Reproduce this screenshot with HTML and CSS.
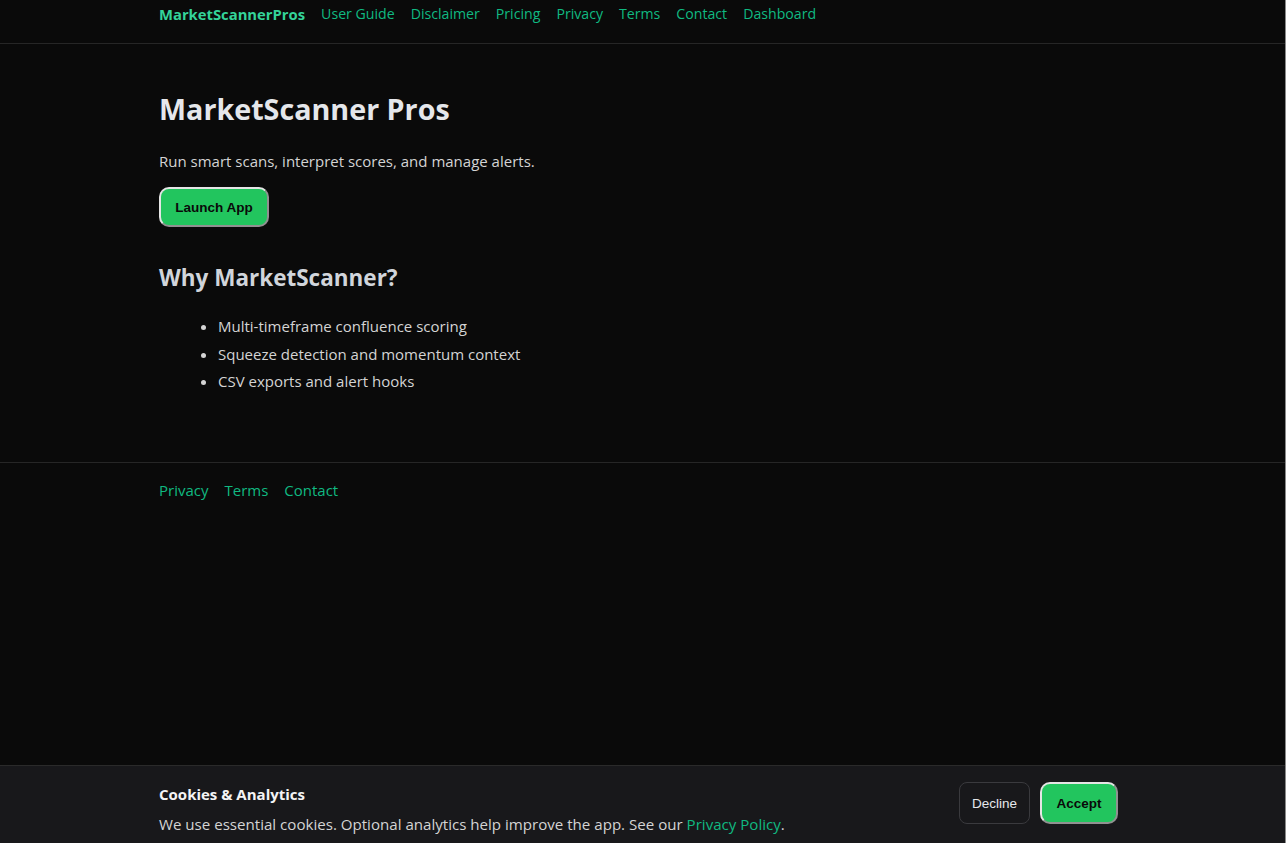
FILE: index.html
```html
<!DOCTYPE html>
<html lang="en">
<head>
<meta charset="utf-8">
<title>MarketScanner Pros</title>
<link rel="stylesheet" href="styles.css">
</head>
<body>
<header class="site-header">
  <nav class="container nav">
    <a class="brand" href="#">MarketScannerPros</a>
    <a class="nav-link" href="#">User Guide</a>
    <a class="nav-link" href="#">Disclaimer</a>
    <a class="nav-link" href="#">Pricing</a>
    <a class="nav-link" href="#">Privacy</a>
    <a class="nav-link" href="#">Terms</a>
    <a class="nav-link" href="#">Contact</a>
    <a class="nav-link" href="#">Dashboard</a>
  </nav>
</header>
<main class="container main">
  <h1 class="title">MarketScanner Pros</h1>
  <p class="lead">Run smart scans, interpret scores, and manage alerts.</p>
  <button class="btn-primary launch">Launch App</button>
  <h2 class="subtitle">Why MarketScanner?</h2>
  <ul class="features">
    <li>Multi-timeframe confluence scoring</li>
    <li>Squeeze detection and momentum context</li>
    <li>CSV exports and alert hooks</li>
  </ul>
</main>
<footer class="site-footer">
  <div class="container footer-links">
    <a class="nav-link" href="#">Privacy</a>
    <a class="nav-link" href="#">Terms</a>
    <a class="nav-link" href="#">Contact</a>
  </div>
</footer>
<div class="cookie-banner">
  <div class="cookie-inner">
    <div class="cookie-text">
      <div class="cookie-title">Cookies &amp; Analytics</div>
      <div class="cookie-desc">We use essential cookies. Optional analytics help improve the app. See our <a class="nav-link" href="#">Privacy Policy</a>.</div>
    </div>
    <div class="cookie-actions">
      <button class="btn-ghost">Decline</button>
      <button class="btn-primary accept">Accept</button>
    </div>
  </div>
</div>
</body>
</html>
```
FILE: styles.css
```css
html {
  background: #8a8a8a;
}
body {
  margin: 0 1px 0 0;
  min-height: 100vh;
  background: #0a0a0a;
  color: #d4d4d4;
  font-family: "Open Sans", "Noto Sans", sans-serif;
  font-size: 14px;
}
a {
  text-decoration: none;
}
.container {
  padding-left: 159px;
  padding-right: 159px;
}
.site-header {
  border-bottom: 1px solid #262626;
}
.nav {
  display: flex;
  align-items: center;
  gap: 16px;
  height: 43px;
  box-sizing: border-box;
  padding-top: 4px;
  padding-bottom: 19px;
  font-size: 14.15px;
}
.nav a {
  line-height: 20px;
}
.brand {
  color: #34d399;
  font-weight: 700;
  font-size: 14.8px;
}
.nav-link {
  color: #10b981;
}
.main {
  padding-top: 47px;
  padding-bottom: 64px;
}
.title {
  margin: 0;
  font-size: 28.7px;
  line-height: 36px;
  font-weight: 700;
  color: #e5e7eb;
}
.lead {
  margin: 23px 0 15px;
  font-size: 15px;
  line-height: 22px;
  color: #d4d4d4;
}
.btn-primary {
  background: #22c55e;
  color: #0a0a0a;
  border: 2px outset #e5e5e5;
  border-radius: 10px;
  font-family: "Liberation Sans", Arial, sans-serif;
  font-weight: 700;
  font-size: 13.5px;
  cursor: pointer;
}
.launch {
  width: 110px;
  height: 40px;
  display: block;
}
.subtitle {
  margin: 35px 0 0;
  font-size: 22.5px;
  line-height: 32px;
  font-weight: 700;
  color: #d1d5db;
}
.features {
  margin: 21px 0 0;
  padding-left: 59px;
  font-size: 15px;
  line-height: 22.5px;
}
.features li {
  margin-bottom: 5px;
}
.site-footer {
  border-top: 1px solid #262626;
}
.footer-links {
  display: flex;
  gap: 16px;
  padding-top: 16px;
  font-size: 15px;
  line-height: 22px;
}
.cookie-banner {
  position: fixed;
  left: 0;
  right: 1px;
  bottom: 0;
  height: 77px;
  background: #18181b;
  border-top: 1px solid #2a2a2a;
}
.cookie-inner {
  display: flex;
  align-items: flex-start;
  justify-content: space-between;
  padding: 16px 167px 0 159px;
}
.cookie-title {
  font-weight: 700;
  color: #f4f4f5;
  font-size: 15px;
  line-height: 26px;
  margin-top: -1px;
}
.cookie-desc {
  margin-top: 6px;
  font-size: 15.1px;
  line-height: 22px;
  color: #d4d4d4;
}
.cookie-actions {
  display: flex;
  gap: 10px;
}
.btn-ghost {
  width: 71px;
  height: 42px;
  background: #18181b;
  color: #e5e7eb;
  border: 1px solid #3a3a3e;
  border-radius: 8px;
  font-family: "Liberation Sans", Arial, sans-serif;
  font-size: 13.5px;
  cursor: pointer;
}
.accept {
  width: 78px;
  height: 42px;
}
```
